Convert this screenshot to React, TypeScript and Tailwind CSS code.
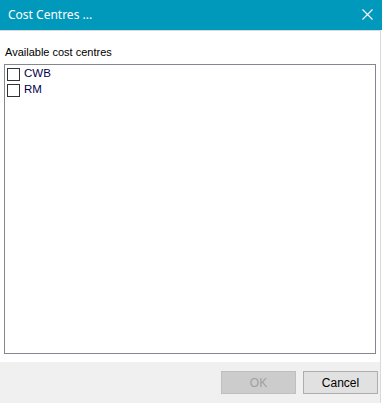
export default function App() {
  const items = ['CWB', 'RM'];

  return (
    <div className="w-[382px] h-[403px] flex flex-col bg-white font-['Liberation_Sans',Arial,sans-serif]">
      {/* Title bar */}
      <div className="h-[30px] shrink-0 bg-[#0099bc] flex items-center justify-between pl-2 pr-[9px]">
        <span className="text-white text-[12px] font-['Noto_Sans',sans-serif]">Cost Centres ...</span>
        <svg width="11" height="11" viewBox="0 0 11 11" className="mb-[1px]">
          <path d="M0.5 0.5 L10.5 10.5 M10.5 0.5 L0.5 10.5" stroke="white" strokeWidth="1.1" />
        </svg>
      </div>

      {/* Body */}
      <div className="flex-1 flex flex-col border-t border-[#d9d9d9] border-r mr-[1px] bg-white">
        <div className="flex-1 flex flex-col px-[4px] pt-[15px] pb-[8px]">
          <span className="text-[11px] text-black leading-[13px] pl-[1px]">Available cost centres</span>
          <div className="mt-[5px] flex-1 border border-[#828790] bg-white pt-[1px] pl-[2px]">
            {items.map((name) => (
              <label key={name} className="flex items-center h-[16px] gap-[4px]">
                <span className="w-[13px] h-[13px] border border-[#333333] bg-white" />
                <span className="text-[11.5px] text-[#000050]">{name}</span>
              </label>
            ))}
          </div>
        </div>

        {/* Footer */}
        <div className="h-[41px] shrink-0 bg-[#f0f0f0] flex items-start justify-end gap-[7px] pt-[9px] pr-[2px]">
          <button
            disabled
            className="w-[75px] h-[23px] bg-[#cccccc] border border-[#bfbfbf] text-[12px] text-[#a0a0a0]"
          >
            OK
          </button>
          <button className="w-[75px] h-[23px] bg-[#e1e1e1] border border-[#adadad] text-[12px] text-black">
            Cancel
          </button>
        </div>
      </div>
    </div>
  );
}
